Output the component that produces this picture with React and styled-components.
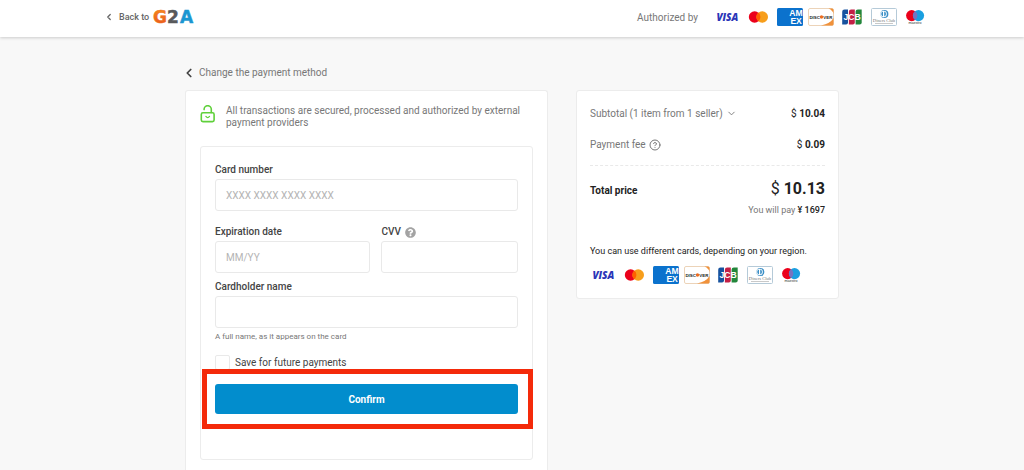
import React from "react";
import styled, { createGlobalStyle } from "styled-components";
import { ChevronDown, ChevronLeft, CircleHelp } from "lucide-react";
import { FaQuestionCircle } from "react-icons/fa";

const GlobalStyle = createGlobalStyle`
  * {
    box-sizing: border-box;
  }

  body {
    background-color: #f8f8f8;
    color: #222;
    font-family: Roboto, "Liberation Sans", sans-serif;
    font-size: 10px;
    margin: 0;
  }
`;

const Page = styled.div`
  display: flex;
  flex-direction: column;
  min-height: 100vh;
`;

const Header = styled.header`
  align-items: center;
  background-color: #fff;
  box-shadow: 0 1px 3px rgba(0, 0, 0, 0.18);
  display: flex;
  height: 37px;
  justify-content: space-between;
  padding: 0 96px 3px 104px;
`;

const HomeLink = styled.a`
  align-items: center;
  color: #666;
  display: flex;
  font-size: 9px;
  font-weight: 500;
  text-decoration: none;

  span {
    margin: 0 3px 0 5px;
  }
`;

const Authorized = styled.div`
  align-items: center;
  color: #777;
  display: flex;
  gap: 16px;
`;

const CardLogos = styled.div`
  display: flex;
  justify-content: space-between;
  width: 214px;

  svg {
    display: block;
  }
`;

const Main = styled.main`
  display: flex;
  flex: 1;
  flex-direction: column;
  margin: 0 auto;
  max-width: 654px;
  padding-top: 29px;
  width: 100%;
`;

const ChangeLink = styled.a`
  align-items: center;
  align-self: flex-start;
  color: #777;
  display: flex;
  gap: 3px;
  line-height: 14px;
  margin-bottom: 10px;
  text-decoration: none;

  svg {
    color: #444;
    margin-left: -3px;
  }
`;

const Columns = styled.div`
  align-items: start;
  display: grid;
  flex: 1;
  gap: 28px;
  grid-template-columns: minmax(0, 1fr) 263px;
`;

const Panel = styled.section`
  background-color: #fff;
  border: 1px solid #ececec;
  border-radius: 3px;
`;

const PaymentPanel = styled(Panel)`
  align-self: stretch;
  border-bottom: 0;
  border-radius: 3px 3px 0 0;
  padding: 14px 14px 10px;
`;

const Notice = styled.div`
  color: #777;
  display: flex;
  gap: 10px;
  line-height: 12px;
  margin-bottom: 17px;

  svg {
    flex-shrink: 0;
    height: 18px;
  }

  p {
    height: 24px;
    margin: 0;
  }
`;

const Form = styled.form`
  border: 1px solid #ececec;
  border-radius: 3px;
  padding: 16px 14px 45px;
`;

const Field = styled.div`
  margin-bottom: ${(props) => props.$gap || "0"};
`;

const FieldRow = styled.div`
  display: grid;
  gap: 11px;
  grid-template-columns: 156fr 137fr;
  margin-bottom: 7px;
`;

const LabelRow = styled.div`
  align-items: center;
  display: flex;
  gap: 4px;
  height: 14px;
  margin-bottom: 2px;

  svg {
    color: #a3a3a3;
  }
`;

const Label = styled.label`
  color: #444;
  font-weight: ${(props) => (props.$light ? 400 : 500)};
  line-height: 14px;
`;

const Input = styled.input`
  background-color: #fff;
  border: 1px solid #e9e9e9;
  border-radius: 3px;
  display: block;
  font-family: inherit;
  font-size: 10px;
  height: 32px;
  padding: 0 10px;
  width: 100%;

  &::placeholder {
    color: #b4b4b4;
  }
`;

const Hint = styled.p`
  color: #777;
  font-size: 8px;
  line-height: 12px;
  margin: 3px 0 12px;
`;

const SaveRow = styled.div`
  align-items: center;
  display: flex;
  gap: 5px;
  margin-bottom: 14px;
`;

const Checkbox = styled.input`
  appearance: none;
  background-color: #fff;
  border: 1px solid #e9e9e9;
  border-radius: 2px;
  height: 15px;
  margin: 0;
  width: 15px;
`;

const Highlight = styled.div`
  position: relative;

  &::after {
    border: 5px solid #f42a0a;
    content: "";
    inset: -15px -15px -15px -13px;
    pointer-events: none;
    position: absolute;
  }
`;

const Confirm = styled.button`
  background-color: #028dcd;
  border: 0;
  border-radius: 3px;
  color: #fff;
  display: block;
  font-family: inherit;
  font-size: 10px;
  font-weight: 700;
  height: 30px;
  width: 100%;
`;

const SummaryPanel = styled(Panel)`
  padding: 7px 13px 14px;
`;

const SummaryRow = styled.div`
  align-items: center;
  color: #777;
  display: flex;
  height: 31px;
  justify-content: space-between;

  span {
    align-items: center;
    display: flex;
    gap: 3px;
  }
`;

const Price = styled.div`
  color: #222;
  font-size: ${(props) => (props.$large ? "16px" : "10px")};

  b {
    font-weight: 700;
  }
`;

const TotalRow = styled.div`
  align-items: baseline;
  border-top: 1px dashed #e9e9e9;
  display: flex;
  justify-content: space-between;
  line-height: 22px;
  margin-top: 5px;
  padding-top: 12px;
`;

const TotalLabel = styled.div`
  font-weight: 700;
`;

const Converted = styled.p`
  color: #777;
  font-size: 9px;
  line-height: 14px;
  margin: 1px 0 27px;
  text-align: right;

  b {
    color: #222;
    font-weight: 500;
  }
`;

const CardsNote = styled.p`
  font-size: 9px;
  line-height: 14px;
  margin: 0 0 8px;
`;

const G2ALogo = () => (
  <svg width="44" height="24" viewBox="0 0 44 24" role="img" aria-label="G2A">
    <defs>
      <linearGradient id="orange" x1="0" y1="0" x2="0" y2="1">
        <stop offset="0" stopColor="#f6901c" />
        <stop offset="1" stopColor="#e8501e" />
      </linearGradient>
    </defs>
    <g fontFamily="DejaVu Sans" fontWeight="700" fontSize="17" strokeWidth="0.5">
      <text x="1" y="18" fill="url(#orange)" stroke="#ee701c">
        G
      </text>
      <text x="15" y="18" fill="#58595b" stroke="#58595b">
        2
      </text>
      <text x="28" y="18" fill="#1b96d1" stroke="#1b96d1">
        A
      </text>
    </g>
  </svg>
);

const Lock = () => (
  <svg
    width="16"
    height="18"
    viewBox="0 0 16 18"
    fill="none"
    stroke="#5fd03a"
    strokeLinecap="round"
    aria-hidden="true"
  >
    <rect x="1.3" y="7.8" width="12.8" height="8.8" rx="1.6" strokeWidth="1.6" />
    <path d="M4.1 4.6V4.3a3.6 3.6 0 0 1 7.2 0V7.5" strokeWidth="1.6" />
    <path d="M5.9 11.4q1.8 2.4 3.6 0" strokeWidth="1.3" />
  </svg>
);

const logoProps = { width: 26, height: 18, viewBox: "0 0 26 18", role: "img" };

const Logos = () => (
  <CardLogos>
    <svg {...logoProps} aria-label="Visa">
      <text
        x="13.4"
        y="12.6"
        fill="#2b36b8"
        fontFamily="Open Sans"
        fontSize="10"
        fontStyle="italic"
        fontWeight="800"
        textAnchor="middle"
      >
        VISA
      </text>
    </svg>
    <svg {...logoProps} aria-label="Mastercard">
      <circle cx="9.6" cy="9" r="5.8" fill="#eb001b" />
      <circle cx="17.2" cy="9" r="5.8" fill="#f79e1b" />
      <path d="M13.4 4.6a5.8 5.8 0 0 1 0 8.8a5.8 5.8 0 0 1 0-8.8" fill="#ff5f00" />
    </svg>
    <svg {...logoProps} aria-label="American Express">
      <rect width="26" height="18" rx="1.5" fill="#0b72cd" />
      <g fill="#fff" fontFamily="Liberation Sans" fontSize="8.6" fontWeight="700">
        <text x="12.2" y="8">
          AM
        </text>
        <text x="13.4" y="16.4">
          EX
        </text>
      </g>
    </svg>
    <svg {...logoProps} aria-label="Discover">
      <rect x="0.5" y="0.5" width="25" height="17" rx="1.5" fill="#fff" stroke="#ecd3b8" />
      <path d="M20.5 0.5H24q1.5 0 1.5 1.5v4Q25 2.5 20.5 0.5" fill="#f0913a" />
      <path d="M13 17.5Q22.5 15.5 25.5 10v6q0 1.5-1.5 1.5z" fill="#f0913a" />
      <circle cx="13.5" cy="9" r="1.7" fill="#ee6c20" />
      <g fill="#222" fontFamily="Liberation Sans" fontSize="4.4" fontWeight="700">
        <text x="1.4" y="10.6">
          DISC
        </text>
        <text x="15.3" y="10.6">
          VER
        </text>
      </g>
    </svg>
    <svg {...logoProps} aria-label="JCB">
      <path d="M5.5 1.5H9v13q0 2-2 2H3.2V3.8q0-2.3 2.3-2.3" fill="#17529e" />
      <path d="M12.1 1.5h3.7v13q0 2-2 2H9.9V3.8q0-2.3 2.2-2.3" fill="#c31f45" />
      <path d="M18.9 1.5h3.8v13q0 2-2 2h-4.1V3.8q0-2.3 2.3-2.3" fill="#23863b" />
      <text
        x="13"
        y="11.8"
        fill="#fff"
        fontFamily="Liberation Sans"
        fontSize="8.6"
        fontWeight="700"
        textAnchor="middle"
      >
        JCB
      </text>
    </svg>
    <svg {...logoProps} aria-label="Diners Club">
      <rect x="0.5" y="0.5" width="25" height="17" rx="1" fill="#fff" stroke="#b5cad8" />
      <circle cx="13.4" cy="6" r="4" fill="#3b8fc6" />
      <circle cx="12.6" cy="6" r="3.2" fill="#fff" />
      <path d="M12 3.6a2.5 2.5 0 0 0 0 4.8zM13.2 3.6a2.5 2.5 0 0 1 0 4.8z" fill="#3b8fc6" />
      <text
        x="13"
        y="14.2"
        fill="#777"
        fontFamily="Liberation Serif"
        fontSize="4.6"
        textAnchor="middle"
      >
        Diners Club
      </text>
      <path d="M4 15.5h18" stroke="#bbb" strokeWidth="0.8" />
    </svg>
    <svg {...logoProps} aria-label="Maestro">
      <circle cx="9.7" cy="7.6" r="5.6" fill="#eb001b" />
      <circle cx="16.5" cy="7.6" r="5.6" fill="#1a9fe0" />
      <path d="M13.1 3.1a5.6 5.6 0 0 1 0 9a5.6 5.6 0 0 1 0-9" fill="#7673c0" />
      <text
        x="13"
        y="16.4"
        fill="#333"
        fontFamily="Liberation Sans"
        fontSize="3.6"
        textAnchor="middle"
      >
        maestro
      </text>
    </svg>
  </CardLogos>
);

const App = () => {
  return (
    <>
      <GlobalStyle />
      <Page>
        <Header>
          <HomeLink href="#home">
            <ChevronLeft size={10} strokeWidth={3} />
            <span>Back to</span>
            <G2ALogo />
          </HomeLink>
          <Authorized>
            Authorized by
            <Logos />
          </Authorized>
        </Header>
        <Main>
          <ChangeLink href="#methods">
            <ChevronLeft size={14} strokeWidth={3} />
            Change the payment method
          </ChangeLink>
          <Columns>
            <PaymentPanel>
              <Notice>
                <Lock />
                <p>
                  All transactions are secured, processed and authorized by external payment
                  providers
                </p>
              </Notice>
              <Form onSubmit={(e) => e.preventDefault()}>
                <Field $gap="14px">
                  <LabelRow>
                    <Label htmlFor="number">Card number</Label>
                  </LabelRow>
                  <Input id="number" placeholder="XXXX XXXX XXXX XXXX" />
                </Field>
                <FieldRow>
                  <Field>
                    <LabelRow>
                      <Label htmlFor="expiry">Expiration date</Label>
                    </LabelRow>
                    <Input id="expiry" placeholder="MM/YY" />
                  </Field>
                  <Field>
                    <LabelRow>
                      <Label htmlFor="cvv">CVV</Label>
                      <FaQuestionCircle size={11} />
                    </LabelRow>
                    <Input id="cvv" />
                  </Field>
                </FieldRow>
                <Field>
                  <LabelRow>
                    <Label htmlFor="holder">Cardholder name</Label>
                  </LabelRow>
                  <Input id="holder" />
                  <Hint>A full name, as it appears on the card</Hint>
                </Field>
                <SaveRow>
                  <Checkbox type="checkbox" id="save" />
                  <Label htmlFor="save" $light>
                    Save for future payments
                  </Label>
                </SaveRow>
                <Highlight>
                  <Confirm type="submit">Confirm</Confirm>
                </Highlight>
              </Form>
            </PaymentPanel>
            <SummaryPanel>
              <SummaryRow>
                <span>
                  Subtotal (1 item from 1 seller)
                  <ChevronDown size={11} />
                </span>
                <Price>
                  $ <b>10.04</b>
                </Price>
              </SummaryRow>
              <SummaryRow>
                <span>
                  Payment fee
                  <CircleHelp size={12} />
                </span>
                <Price>
                  $ <b>0.09</b>
                </Price>
              </SummaryRow>
              <TotalRow>
                <TotalLabel>Total price</TotalLabel>
                <Price $large>
                  $ <b>10.13</b>
                </Price>
              </TotalRow>
              <Converted>
                You will pay <b>¥ 1697</b>
              </Converted>
              <CardsNote>You can use different cards, depending on your region.</CardsNote>
              <Logos />
            </SummaryPanel>
          </Columns>
        </Main>
      </Page>
    </>
  );
};

export default App;
